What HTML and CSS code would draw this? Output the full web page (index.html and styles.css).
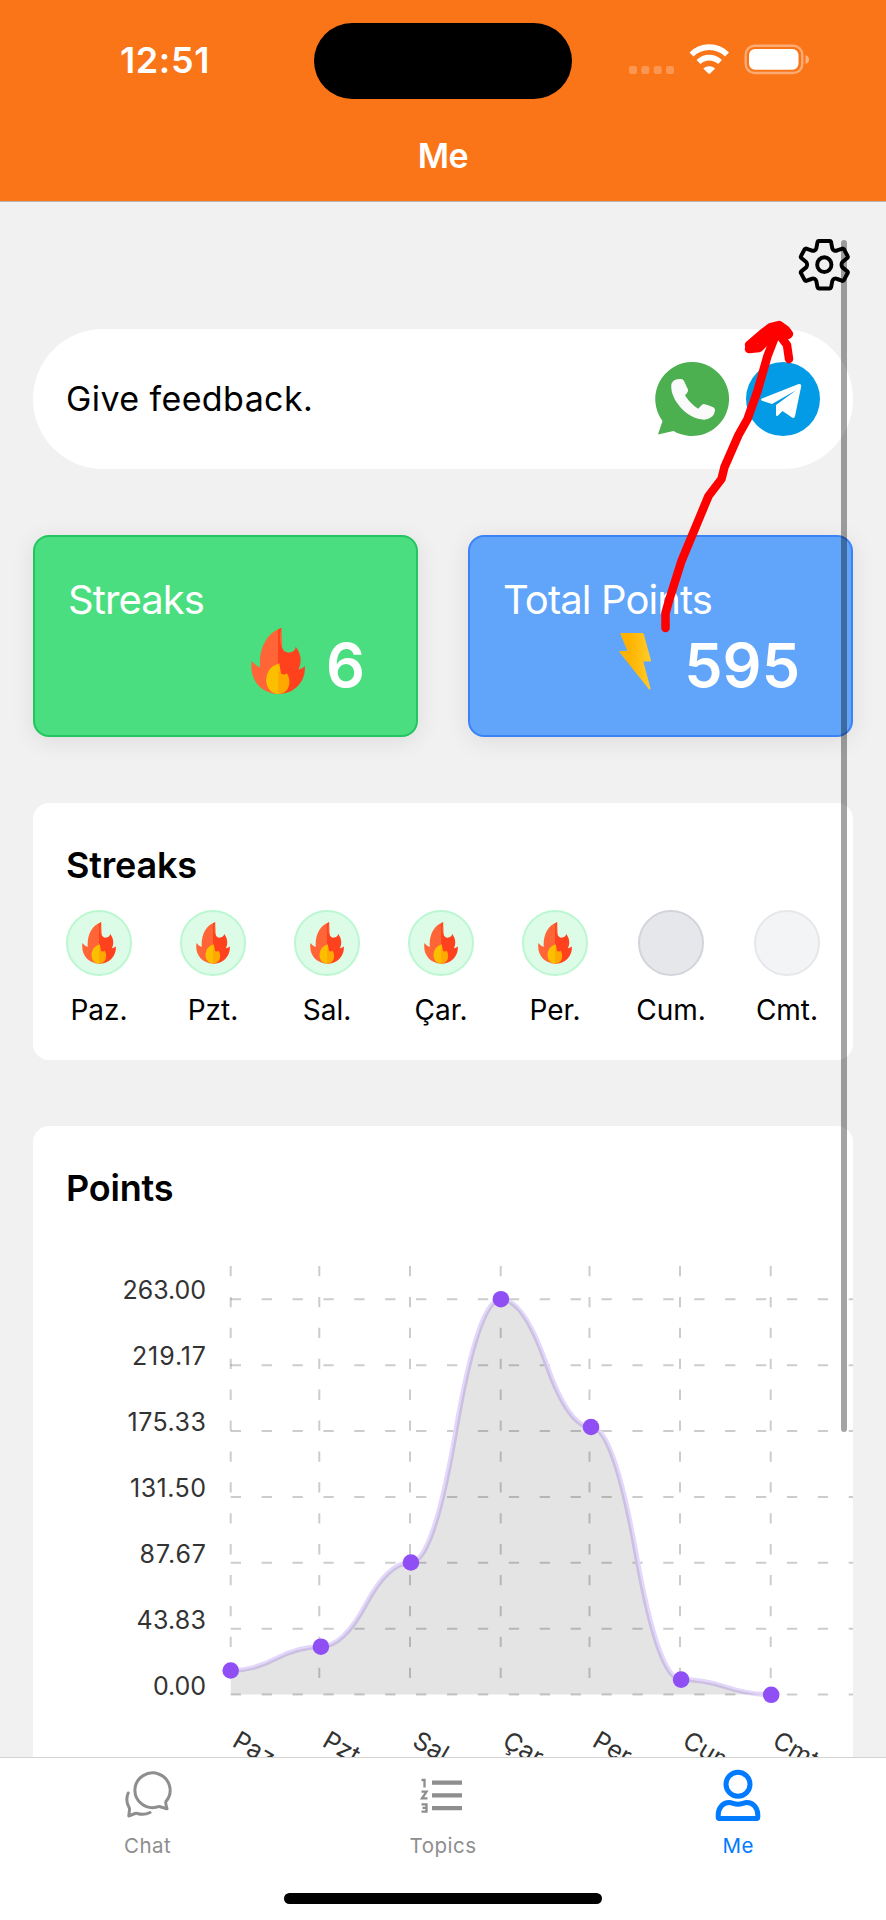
FILE: index.html
```
<!DOCTYPE html>
<html lang="en">
<head>
<meta charset="utf-8">
<title>Me</title>
<link rel="stylesheet" href="styles.css">
</head>
<body>
<svg width="0" height="0" class="defs">
  <symbol id="flame" viewBox="0 0 54 66">
    <path fill="#ff6536" d="M30.500 0C17 4 9 18 9 35v4.500C6 38 3 36 .7 33-2 51 9 65 27 66L32 40z"/>
    <path fill="#ff421d" d="M30.500 0C27 12 30 24 37 24.500c5 0 8-3 7.500-6 5 6 7 14 3 23 2.500-.5 5-2 6.300-3.500C55 53 44 66 27 66V1.500z"/>
    <path fill="#fbbf00" d="M28.300 35.500C11 39 11 65 27 66l4-14z"/>
    <path fill="#ffa900" d="M28.300 35.500c-2.500 7 1 11 4.700 11q2 0 2.500-1.500C41 52 39 66 27 66V36z"/>
  </symbol>
</svg>
<div class="screen">
  <header class="header">
    <div class="status">
      <span class="time">12:51</span>
      <span class="island"></span>
      <svg class="signals" width="182" height="32" viewBox="628 44 182 32">
        <g fill="#fff" fill-opacity=".25"><rect x="629" y="66" width="8" height="8" rx="2.500"/><rect x="641.300" y="66" width="8" height="8" rx="2.500"/><rect x="653.700" y="66" width="8" height="8" rx="2.500"/><rect x="666" y="66" width="8" height="8" rx="2.500"/></g>
        <g fill="none" stroke="#fff" stroke-width="5.600"><path d="M691.500 54.500a25 25 0 0 1 35.500 0"/><path d="M698.500 62a15.500 15.500 0 0 1 21.500 0"/></g>
        <path fill="#fff" d="M703.300 68.500a8.700 8.700 0 0 1 11.900 0l-5.100 5q-.9.800-1.700 0z"/>
        <rect x="745.700" y="45.700" width="56.600" height="27.300" rx="9" fill="none" stroke="#fff" stroke-opacity=".4" stroke-width="2.400"/>
        <rect x="749" y="49" width="49.500" height="20.700" rx="6" fill="#fff"/>
        <path d="M805.500 55v9q3.500-1 3.500-4.500t-3.500-4.500z" fill="#fff" fill-opacity=".45"/>
      </svg>
    </div>
    <h1 class="title">Me</h1>
  </header>

  <main class="content">
    <div class="toolbar">
      <svg width="54" height="56" viewBox="-1 -1 54 56" fill="none" stroke="#000" stroke-width="4.100" stroke-linejoin="round">
        <g transform="translate(26.300 26.700) scale(.95 .98) translate(-26.500 -26.300)">
        <circle cx="26.500" cy="26.300" r="7.500"/>
        <path d="M20.700 2h11.600q1 0 1.300 1l1.300 6.600q.5 1.500 2 2.300 1.700.5 3.200-.2l5.500-1.900q1 0 1.600.8l3.800 6.900q.6 1 0 1.700l-5.400 4.400q-1 1.200-1 2.700t1 2.700l5.400 4.400q.6.700 0 1.700l-3.800 6.900q-.6.800-1.600.8l-5.500-1.900q-1.500-.7-3.200-.2-1.500.8-2 2.300l-1.300 6.600q-.3 1-1.300 1H20.700q-1 0-1.300-1l-1.300-6.600q-.5-1.500-2-2.300-1.700-.5-3.200.2l-5.500 1.900q-1 0-1.600-.8L2 35.100q-.6-1 0-1.700l5.400-4.400q1-1.200 1-2.700t-1-2.700L2 19.200q-.6-.7 0-1.700l3.800-6.900q.6-.8 1.600-.8l5.500 1.900q1.500.7 3.200.2 1.500-.8 2-2.300L19.400 3q.3-1 1.300-1z"/>
        </g>
      </svg>
    </div>

    <section class="feedback">
      <span class="feedback-text">Give feedback.</span>
      <div class="social">
        <svg width="76" height="76" viewBox="0 0 76 76">
          <path fill="#4caf50" d="M38.500 1a37 37 0 1 1-19 69L4 73.500 8.500 60A37 37 0 0 1 38.500 1z"/>
          <path fill="#fafafa" d="M26.500 18q2.500-.2 3.500 2l4.200 9c-.4 2.500-2 4.200-3.200 5 2.500 5 8 10.500 13.300 13.800 1.300-1.500 3-4 5.300-4.800q4.500.6 10 3.600 2 1 1.300 3.500c-1 6-6.500 9-12.500 8.500C32 57 16 38 17.300 24c.3-3.500 4-6.500 9.200-6z"/>
        </svg>
        <svg width="74" height="76" viewBox="0 0 74 76">
          <circle cx="37" cy="38" r="37" fill="#039be5"/>
          <path fill="#fff" d="M16 37.500 52 23.300q3.500-1 3.200 2l-6.200 30q-.7 2.500-3 1.300L36.500 50l-4.500 4.500q-2 1.500-2-1V44L50.500 29 26 43 15.500 39.500q-1-1.200.5-2z"/>
        </svg>
      </div>
    </section>

    <section class="stats">
      <div class="stat stat-green">
        <span class="stat-name">Streaks</span>
        <div class="stat-row"><svg class="stat-flame" width="54" height="66"><use href="#flame"/></svg><b class="stat-value">6</b></div>
      </div>
      <div class="stat stat-blue">
        <span class="stat-name">Total Points</span>
        <div class="stat-row">
          <svg class="bolt" width="32" height="58" viewBox="0 0 32 58"><defs><linearGradient id="gold"><stop offset=".3" stop-color="#ffb300"/><stop offset="1" stop-color="#ffca28"/></linearGradient></defs><path fill="url(#gold)" stroke="url(#gold)" stroke-linejoin="round" stroke-width="2" d="M2.500 2h21.200l7.300 26.500h-8L30.500 56.500 1.500 20h8.500z"/></svg>
          <b class="stat-value">595</b>
        </div>
      </div>
    </section>

    <section class="card streaks">
      <h2 class="card-title">Streaks</h2>
      <div class="days">
        <div class="day"><span class="dot on"><svg width="34" height="42"><use href="#flame"/></svg></span><span>Paz.</span></div>
        <div class="day"><span class="dot on"><svg width="34" height="42"><use href="#flame"/></svg></span><span>Pzt.</span></div>
        <div class="day"><span class="dot on"><svg width="34" height="42"><use href="#flame"/></svg></span><span>Sal.</span></div>
        <div class="day"><span class="dot on"><svg width="34" height="42"><use href="#flame"/></svg></span><span>Çar.</span></div>
        <div class="day"><span class="dot on"><svg width="34" height="42"><use href="#flame"/></svg></span><span>Per.</span></div>
        <div class="day day-wide"><span class="dot today"></span><span>Cum.</span></div>
        <div class="day"><span class="dot next"></span><span>Cmt.</span></div>
      </div>
    </section>

    <section class="card points">
      <h2 class="card-title">Points</h2>
      <svg class="chart" width="787" height="560" viewBox="66 1230 787 560">
        <path class="grid" d="M230.700 1299.300H860M230.700 1365.200H860M230.700 1431.100H860M230.700 1497H860M230.700 1562.800H860M230.700 1628.700H860M230.700 1694.600H860"/>
        <path class="grid" d="M230.700 1266V1690M319.300 1266V1690M410 1266V1690M500.700 1266V1690M589.500 1266V1690M680 1266V1690M770.700 1266V1690"/>
        <path class="line" d="M230.700 1670.500Q253.200 1670.500 275.700 1658.600T320.700 1646.700Q343.200 1646.700 365.700 1604.600T410.700 1562.500Q433.300 1562.500 455.800 1430.900T501 1299.300Q523.500 1299.300 546 1363.100T591 1427Q613.500 1427 636 1553.200T681 1679.500Q703.500 1679.500 726 1687T771 1694.600"/>
        <path class="area" d="M230.700 1670.500Q253.200 1670.500 275.700 1658.600T320.700 1646.700Q343.200 1646.700 365.700 1604.600T410.700 1562.500Q433.300 1562.500 455.800 1430.900T501 1299.300Q523.500 1299.300 546 1363.100T591 1427Q613.500 1427 636 1553.200T681 1679.500Q703.500 1679.500 726 1687T771 1694.600H230.700z"/>
        <g fill="#904ff4"><circle cx="230.700" cy="1670.500" r="8.300"/><circle cx="320.900" cy="1646.700" r="8.300"/><circle cx="410.900" cy="1562.500" r="8.300"/><circle cx="500.900" cy="1299.200" r="8.300"/><circle cx="591" cy="1427" r="8.300"/><circle cx="681.100" cy="1679.600" r="8.300"/><circle cx="771.200" cy="1694.800" r="8.300"/></g>
        <g class="ylabels"><text x="206" y="1299.300" textLength="83.500">263.00</text><text x="206" y="1365.200" textLength="74">219.17</text><text x="206" y="1431.100" textLength="78.500">175.33</text><text x="206" y="1497" textLength="76">131.50</text><text x="206" y="1562.800" textLength="66.500">87.67</text><text x="206" y="1628.700" textLength="69.500">43.83</text><text x="206" y="1694.600" textLength="53">0.00</text></g>
        <g class="xlabels"><text transform="translate(231 1745.500) rotate(30)">Paz.</text><text transform="translate(321 1745.500) rotate(30)">Pzt.</text><text transform="translate(411 1745.500) rotate(30)">Sal.</text><text transform="translate(501 1745.500) rotate(30)">Çar.</text><text transform="translate(591 1745.500) rotate(30)">Per.</text><text transform="translate(681 1745.500) rotate(30)">Cum.</text><text transform="translate(771 1745.500) rotate(30)">Cmt.</text></g>
      </svg>
    </section>
  </main>

  <nav class="tabs">
    <div class="tab-list">
      <div class="tab">
        <svg width="48" height="52" viewBox="123.500 1769 48 52" fill="none" stroke="#8e8e8f" stroke-width="3" stroke-linecap="round" stroke-linejoin="round"><path d="M165.400 1801.500Q164.800 1803 166.500 1808.700L159.500 1806.700Q158 1806.300 156.500 1807A17.600 17.300 0 1 1 165.400 1801.500z"/><path d="M127.700 1793C125.600 1798 126 1803 128.600 1807.500Q129.400 1809 128.800 1811.500L128.300 1816 134.500 1813.500Q135.700 1813 137 1813.500 143.500 1815.500 149.500 1812.500"/></svg>
        <span>Chat</span>
      </div>
      <div class="tab">
        <svg width="48" height="52" viewBox="419 1769 48 52" fill="none" stroke="#8e8e8f"><path stroke-width="4.200" d="M432 1782.700h30M432 1795.400h30M432 1808.200h30"/><path stroke-width="2.300" d="M421.500 1780h3v7.500M421.500 1791.700h5l-4.500 6.600h5.500M421.500 1804.300h5v7.400h-5M422.500 1807.800h4"/></svg>
        <span>Topics</span>
      </div>
      <div class="tab active">
        <svg width="48" height="52" viewBox="713.500 1769 48 52" fill="none" stroke="#007aff" stroke-width="5" stroke-linejoin="round"><circle cx="737.500" cy="1784.300" r="12"/><path d="M717.700 1817v-2c0-7 4.500-12.500 11-12.500 3 0 5 1.700 8.800 1.700s5.800-1.700 8.800-1.700c6.500 0 11 5.500 11 12.500v2q0 1.600-1.600 1.600h-36.400q-1.600 0-1.600-1.600z"/></svg>
        <span>Me</span>
      </div>
    </div>
    <div class="home-indicator"></div>
  </nav>

  <div class="scrollbar"></div>
  <svg class="arrow" width="886" height="700" viewBox="0 0 886 700" fill="none" stroke="#f00" stroke-linecap="round" stroke-linejoin="round">
    <path stroke-width="8.500" d="M665.500 628v-15l4-14 12-38 5-12 22-53 13-17 3-12 14-32 9-16 10-28 10-35 7-18"/>
    <path stroke-width="8.500" d="M749 349l10-1 8-8 11-10M749 345l14-12 8-6 8-2 7 5 3 4M778 333l9 12 2 14M765 335l14-7 9 7"/>
  </svg>
</div>
</body>
</html>
```
FILE: styles.css
```
* { box-sizing: border-box; }
body { margin: 0; font-family: Inter, "Liberation Sans", sans-serif; color: #000; background: #f1f1f1; }
.defs { position: absolute; }
.screen { position: relative; width: 886px; height: 1920px; overflow: hidden; display: flex; flex-direction: column; background: #f1f1f1; }
.header { height: 201px; flex: none; background: #fa7418; color: #fff; box-shadow: 0 1px 0 #b5b5b5; }
.status { height: 122px; display: grid; grid-template-columns: 314px 258px 1fr; align-items: center; }
.time { padding-left: 120px; font-size: 36px; font-weight: 600; letter-spacing: .6px; margin-top: -2px; }
.island { width: 258px; height: 76px; border-radius: 38px; background: #000; }
.signals { margin-left: 56px; margin-top: -2px; }
.title { margin: 0; font-size: 34px; font-weight: 600; text-align: center; line-height: 68px; letter-spacing: -.4px; }
.content { flex: 1; min-height: 0; overflow: hidden; padding: 36px 33px 0; }
.toolbar { display: flex; justify-content: flex-end; height: 92px; padding-right: 2px; }
.feedback { height: 140px; border-radius: 70px; background: #fff; display: flex; align-items: center; justify-content: space-between; padding: 0 33px; }
.feedback-text { font-size: 34px; letter-spacing: .4px; margin-top: -2px; }
.social { display: flex; gap: 16px; }
.stats { margin-top: 66px; display: grid; grid-template-columns: 385px 385px; justify-content: space-between; }
.stat { height: 202px; border: 2px solid; border-radius: 16px; padding: 39px 51px 0 33px; color: #fff; box-shadow: 0 4px 24px rgba(0,0,0,.09); }
.stat-green { background: #4ade80; border-color: #22c55e; }
.stat-blue { background: #60a5fa; border-color: #3b82f6; }
.stat-name { display: block; font-size: 40px; line-height: 48px; font-weight: 400; letter-spacing: -.9px; }
.stat-row { display: flex; justify-content: flex-end; align-items: center; height: 80px; }
.stat-flame { margin: -6px 21px 0 0; }
.bolt { margin: -6px 33px 0 0; }
.stat-value { font-size: 61px; line-height: 80px; font-weight: 600; margin-top: 2px; }
.card { background: #fff; border-radius: 16px; margin-top: 66px; padding: 41px 33px 0; }
.card-title { margin: 0; font-size: 36px; line-height: 42px; font-weight: 600; letter-spacing: -.2px; }
.streaks { height: 257px; }
.days { display: flex; justify-content: space-between; margin-top: 24px; }
.day { width: 66px; display: flex; flex-direction: column; align-items: center; font-size: 28px; line-height: 34px; gap: 17px; white-space: nowrap; }
.day-wide { width: 70px; }
.dot { width: 66px; height: 66px; border: 2px solid; border-radius: 50%; display: flex; align-items: center; justify-content: center; }
.on { background: #dcfce7; border-color: #bbf7d0; }
.today { background: #e5e7eb; border-color: #d1d5db; }
.next { background: #f3f4f6; border-color: #e5e7eb; }
.points { height: 700px; padding-right: 0; }
.chart { display: block; margin-top: 21px; }
.grid { fill: none; stroke: #000; stroke-opacity: .2; stroke-width: 2; stroke-dasharray: 10.300 20.600; }
.line { fill: none; stroke: #e3d7fb; stroke-width: 5; }
.area { fill: #000; fill-opacity: .106; }
.ylabels { font-size: 25px; fill: #333; text-anchor: end; }
.xlabels { font-size: 25px; fill: #333; }
.tabs { flex: none; height: 163px; background: #fff; border-top: 1px solid #d4d4d4; display: flex; flex-direction: column; align-items: center; justify-content: space-between; padding-bottom: 16px; }
.tab-list { width: 100%; display: grid; grid-template-columns: repeat(3, 1fr); }
.tab { display: flex; flex-direction: column; align-items: center; padding-top: 11px; gap: 11px; color: #8e8e8f; font-size: 20.500px; line-height: 28px; letter-spacing: .5px; }
.active { color: #007aff; }
.home-indicator { width: 318px; height: 11px; border-radius: 6px; background: #000; }
.scrollbar { position: absolute; left: 841px; top: 240px; width: 6px; height: 1192px; border-radius: 3px; background: rgba(0,0,0,.355); }
.arrow { position: absolute; left: 0; top: 0; }
```
